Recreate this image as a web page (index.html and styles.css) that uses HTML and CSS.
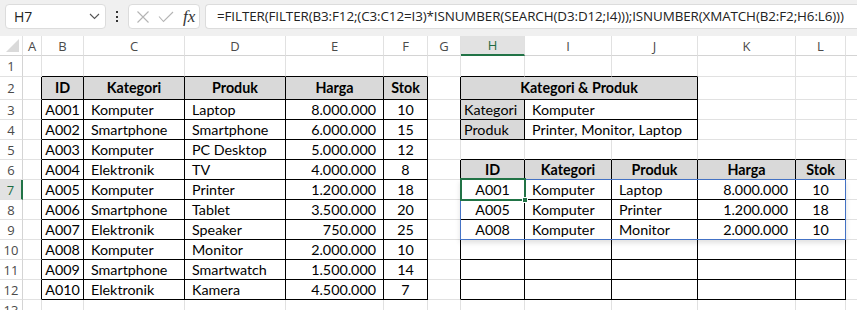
FILE: index.html
```html
<!DOCTYPE html>
<html lang="id">

<head>
    <meta charset="UTF-8" />
    <meta name="viewport" content="width=device-width, initial-scale=1" />
    <title>FILTER - Kategori &amp; Produk</title>
    <link rel="stylesheet" href="styles.css">
</head>

<body>
    <!-- Baris rumus -->
    <div class="formula-bar">
        <div class="name-box">
            <span>H7</span>
            <svg width="11" height="7" viewBox="0 0 11 7"><path d="M1 1l4.5 4.5L10 1" stroke="#555" stroke-width="1.1" fill="none" /></svg>
        </div>
        <div class="dots">
            <svg width="4" height="14" viewBox="0 0 4 14"><rect x="1" y="1" width="2" height="2" fill="#333" /><rect x="1" y="6" width="2" height="2" fill="#333" /><rect x="1" y="10" width="2" height="2" fill="#333" /></svg>
        </div>
        <div class="fx-box">
            <svg width="14" height="14" viewBox="0 0 14 14"><path d="M1.5 1.5l11 11M12.5 1.5l-11 11" stroke="#b4b4b4" stroke-width="1.1" fill="none" /></svg>
            <svg width="16" height="12" viewBox="0 0 16 12"><path d="M1 5.5l4.5 5L15 1" stroke="#b4b4b4" stroke-width="1.1" fill="none" /></svg>
            <span class="fx">fx</span>
        </div>
        <div class="formula">=FILTER(FILTER(B3:F12;(C3:C12=I3)*ISNUMBER(SEARCH(D3:D12;I4)));ISNUMBER(XMATCH(B2:F2;H6:L6)))</div>
    </div>

    <!-- Lembar kerja -->
    <div class="sheet">
        <table class="grid">
            <colgroup>
                <col class="w-rh">
                <col class="w-a">
                <col class="w-b">
                <col class="w-c">
                <col class="w-d">
                <col class="w-e">
                <col class="w-f">
                <col class="w-g">
                <col class="w-h">
                <col class="w-i">
                <col class="w-j">
                <col class="w-k">
                <col class="w-l">
                <col class="w-m">
            </colgroup>
            <tr class="col-head">
                <td class="corner"><span class="tri"></span></td>
                <td>A</td><td>B</td><td>C</td><td>D</td><td>E</td><td>F</td><td>G</td>
                <td class="active">H</td><td>I</td><td>J</td><td>K</td><td>L</td><td></td>
            </tr>
            <tr class="r1">
                <td class="rh">1</td>
                <td></td><td class="bb"></td><td class="bb"></td><td class="bb"></td><td class="bb"></td><td class="bb"></td><td></td>
                <td class="bb"></td><td class="bb"></td><td class="bb"></td><td></td><td></td><td></td>
            </tr>
            <tr class="r2">
                <td class="rh">2</td>
                <td class="rb"></td>
                <td class="t th c">ID</td><td class="t th c">Kategori</td><td class="t th c">Produk</td><td class="t th c">Harga</td><td class="t th c">Stok</td>
                <td class="rb"></td>
                <td class="t th c" colspan="3">Kategori &amp; Produk</td>
                <td></td><td></td><td></td>
            </tr>
            <tr>
                <td class="rh">3</td>
                <td class="rb"></td>
                <td class="t c">A001</td><td class="t">Komputer</td><td class="t">Laptop</td><td class="t r">8.000.000</td><td class="t c">10</td>
                <td class="rb"></td>
                <td class="t lab">Kategori</td><td class="t" colspan="2">Komputer</td>
                <td></td><td></td><td></td>
            </tr>
            <tr>
                <td class="rh">4</td>
                <td class="rb"></td>
                <td class="t c">A002</td><td class="t">Smartphone</td><td class="t">Smartphone</td><td class="t r">6.000.000</td><td class="t c">15</td>
                <td class="rb"></td>
                <td class="t lab">Produk</td><td class="t" colspan="2">Printer, Monitor, Laptop</td>
                <td></td><td></td><td></td>
            </tr>
            <tr>
                <td class="rh">5</td>
                <td class="rb"></td>
                <td class="t c">A003</td><td class="t">Komputer</td><td class="t">PC Desktop</td><td class="t r">5.000.000</td><td class="t c">12</td>
                <td></td>
                <td class="bb"></td><td class="bb"></td><td class="bb"></td><td class="bb"></td><td class="bb"></td><td></td>
            </tr>
            <tr>
                <td class="rh">6</td>
                <td class="rb"></td>
                <td class="t c">A004</td><td class="t">Elektronik</td><td class="t">TV</td><td class="t r">4.000.000</td><td class="t c">8</td>
                <td class="rb"></td>
                <td class="t th c">ID</td><td class="t th c">Kategori</td><td class="t th c">Produk</td><td class="t th c">Harga</td><td class="t th c">Stok</td>
                <td></td>
            </tr>
            <tr>
                <td class="rh active">7</td>
                <td class="rb"></td>
                <td class="t c">A005</td><td class="t">Komputer</td><td class="t">Printer</td><td class="t r">1.200.000</td><td class="t c">18</td>
                <td class="rb"></td>
                <td class="t c">A001</td><td class="t">Komputer</td><td class="t">Laptop</td><td class="t r">8.000.000</td><td class="t c">10</td>
                <td></td>
            </tr>
            <tr>
                <td class="rh">8</td>
                <td class="rb"></td>
                <td class="t c">A006</td><td class="t">Smartphone</td><td class="t">Tablet</td><td class="t r">3.500.000</td><td class="t c">20</td>
                <td class="rb"></td>
                <td class="t c">A005</td><td class="t">Komputer</td><td class="t">Printer</td><td class="t r">1.200.000</td><td class="t c">18</td>
                <td></td>
            </tr>
            <tr>
                <td class="rh">9</td>
                <td class="rb"></td>
                <td class="t c">A007</td><td class="t">Elektronik</td><td class="t">Speaker</td><td class="t r">750.000</td><td class="t c">25</td>
                <td class="rb"></td>
                <td class="t c">A008</td><td class="t">Komputer</td><td class="t">Monitor</td><td class="t r">2.000.000</td><td class="t c">10</td>
                <td></td>
            </tr>
            <tr>
                <td class="rh">10</td>
                <td class="rb"></td>
                <td class="t c">A008</td><td class="t">Komputer</td><td class="t">Monitor</td><td class="t r">2.000.000</td><td class="t c">10</td>
                <td class="rb"></td>
                <td class="t"></td><td class="t"></td><td class="t"></td><td class="t"></td><td class="t"></td>
                <td></td>
            </tr>
            <tr>
                <td class="rh">11</td>
                <td class="rb"></td>
                <td class="t c">A009</td><td class="t">Smartphone</td><td class="t">Smartwatch</td><td class="t r">1.500.000</td><td class="t c">14</td>
                <td class="rb"></td>
                <td class="t"></td><td class="t"></td><td class="t"></td><td class="t"></td><td class="t"></td>
                <td></td>
            </tr>
            <tr>
                <td class="rh">12</td>
                <td class="rb"></td>
                <td class="t c">A010</td><td class="t">Elektronik</td><td class="t">Kamera</td><td class="t r">4.500.000</td><td class="t c">7</td>
                <td class="rb"></td>
                <td class="t"></td><td class="t"></td><td class="t"></td><td class="t"></td><td class="t"></td>
                <td></td>
            </tr>
            <tr>
                <td class="rh">13</td>
                <td></td><td></td><td></td><td></td><td></td><td></td><td></td>
                <td></td><td></td><td></td><td></td><td></td><td></td>
            </tr>
        </table>

        <!-- rentang spill + sel aktif -->
        <div class="spill"></div>
        <div class="selected"><span class="handle"></span></div>
    </div>
</body>

</html>
```

FILE: styles.css
```css
* {
    margin: 0;
    padding: 0;
    box-sizing: border-box;
}

body {
    width: 857px;
    height: 310px;
    overflow: hidden;
    background-color: #fff;
    font-family: 'Lato', 'Liberation Sans', sans-serif;
}

/* baris rumus */

.formula-bar {
    display: flex;
    align-items: center;
    height: 36px;
    padding: 0 0 3px 5px;
    background-color: #f0f0f0;
}

.name-box {
    display: flex;
    align-items: center;
    justify-content: space-between;
    width: 101px;
    height: 25px;
    padding: 0 5px 0 8px;
    background: #fff;
    border: 1px solid #dcdcdc;
    border-radius: 4px;
    font-family: 'Open Sans', sans-serif;
    font-size: 14px;
    color: #222;
}

.dots {
    display: flex;
    justify-content: center;
    width: 22px;
}

.fx-box {
    display: flex;
    align-items: center;
    width: 72px;
    height: 25px;
    padding-left: 7px;
    gap: 8px;
    background: #fff;
    border: 1px solid #dcdcdc;
    border-radius: 4px;
}

.fx {
    font-family: 'Liberation Serif', serif;
    font-style: italic;
    font-size: 17px;
    color: #333;
    margin-left: 1px;
}

.formula {
    flex: 1;
    min-width: 0;
    height: 25px;
    margin-left: 5px;
    padding-left: 11px;
    line-height: 23px;
    white-space: nowrap;
    background: #fff;
    border: 1px solid #dcdcdc;
    border-right: none;
    border-radius: 4px 0 0 4px;
    font-family: 'Open Sans', sans-serif;
    font-size: 13.4px;
    letter-spacing: -0.1px;
    color: #222;
}

/* lembar kerja */

.sheet {
    position: relative;
}

.grid {
    border-collapse: separate;
    border-spacing: 0;
    table-layout: fixed;
    width: 906px;
    font-size: 14.3px;
    color: #000;
}

.w-rh { width: 23px; }
.w-a { width: 19px; }
.w-b { width: 42px; }
.w-c { width: 101px; }
.w-d { width: 101px; }
.w-e { width: 98px; }
.w-f { width: 44px; }
.w-g { width: 33px; }
.w-h { width: 64px; }
.w-i { width: 87px; }
.w-j { width: 86px; }
.w-k { width: 98px; }
.w-l { width: 50px; }
.w-m { width: 60px; }

.grid td {
    height: 20px;
    padding: 0 7px;
    border-right: 1px solid #e1e1e1;
    border-bottom: 1px solid #e1e1e1;
    white-space: nowrap;
    overflow: hidden;
    vertical-align: middle;
    line-height: 18px;
}

.grid .r1 td { height: 21px; }
.grid .r2 td { height: 23px; }

.col-head td {
    height: 20px;
    padding: 0;
    text-align: center;
    font-family: 'Open Sans', sans-serif;
    font-size: 13px;
    color: #4a4a4a;
    border-right-color: #e1e1e1;
    border-bottom-color: #d4d4d4;
}

.col-head td.active {
    background: #e2e2e2;
    color: #1e6b41;
    border-bottom: 2px solid #217346;
}

.corner {
    position: relative;
}

.tri {
    position: absolute;
    right: 3px;
    bottom: 3px;
    width: 0;
    height: 0;
    border-left: 13px solid transparent;
    border-bottom: 13px solid #dadada;
}

.grid td.rh {
    padding: 0;
    text-align: center;
    font-family: 'Open Sans', sans-serif;
    font-size: 13px;
    color: #4a4a4a;
    border-right-color: #d4d4d4;
}

.grid td.rh.active {
    background: #e2e2e2;
    color: #1e6b41;
    border-right: 2px solid #217346;
}

.grid td.t {
    border-right-color: #000;
    border-bottom-color: #000;
}

.grid td.bb {
    border-bottom-color: #000;
}

.grid td.rb {
    border-right-color: #000;
}

.th {
    background: #d9d9d9;
    font-weight: bold;
}

.grid td.lab {
    background: #d9d9d9;
    padding-left: 3px;
}

.grid td.c {
    padding: 0;
    text-align: center;
}

.r { text-align: right; }

.spill {
    position: absolute;
    left: 460px;
    top: 143px;
    width: 386px;
    height: 61px;
    border: 1px solid #4472c4;
    box-shadow: 0 3px 5px rgba(0, 0, 0, 0.12);
    pointer-events: none;
}

.selected {
    position: absolute;
    left: 460px;
    top: 142px;
    width: 66px;
    height: 23px;
    border: 2px solid #217346;
}

.handle {
    position: absolute;
    right: -4px;
    bottom: -4px;
    width: 6px;
    height: 6px;
    background: #217346;
    border: 1px solid #fff;
}
```
